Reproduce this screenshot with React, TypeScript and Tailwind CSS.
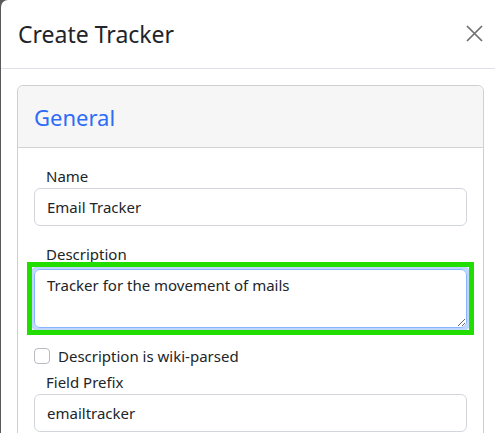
export default function App() {
  return (
    <div
      className="w-[495px] h-[433px] overflow-hidden bg-[#5a5a5a] flex"
      style={{ fontFamily: '"Noto Sans", "Open Sans", sans-serif' }}
    >
      <div className="ml-[1px] w-[510px] shrink-0 bg-white rounded-tl-[7px] text-[#212529]">
        <div className="h-[69px] flex items-center justify-between pl-[17px] pr-[28px] border-b border-[#dee2e6]">
          <h1 className="text-[23px] leading-none">Create Tracker</h1>
          <svg width="17" height="17" viewBox="0 0 17 17" className="text-[#6f6f6f] -mt-[1px]">
            <path d="M1 1L16 16M16 1L1 16" stroke="currentColor" strokeWidth="1.7" />
          </svg>
        </div>
        <div className="pt-[16px] pl-[16px] w-[483px]">
          <div className="border border-[#cfcfcf] rounded-[6px]">
            <div className="h-[62px] bg-[#f6f6f6] border-b border-[#d3d3d3] rounded-t-[6px] flex items-center px-[16px]">
              <h2 className="text-[22px] text-[#2d6cf6] leading-none">General</h2>
            </div>
            <div className="px-[16px] pt-[16px] flex flex-col">
              <label className="px-[12px] text-[15px] leading-[24px]">Name</label>
              <input
                className="h-[38px] border border-[#d2d6dc] rounded-[6px] px-[12px] text-[15px] outline-none"
                defaultValue="Email Tracker"
              />
              <label className="mt-[16px] px-[12px] text-[15px] leading-[24px]">Description</label>
              <div className="relative mt-[3px] flex">
                <textarea
                  className="w-full h-[59px] border border-[#86b7fe] rounded-[6px] px-[12px] pt-[3px] text-[15px] leading-[24px] resize-y shadow-[0_0_0_4px_#bfd7fd] outline-none"
                  defaultValue="Tracker for the movement of mails"
                />
                <span className="absolute -inset-[7px] border-[5px] border-[#22dd00] pointer-events-none" />
              </div>
              <label className="mt-[16px] flex items-center gap-[8px] text-[15px] leading-[24px]">
                <span className="w-[16px] h-[16px] border border-[#b8bcc1] rounded-[4px] bg-white" />
                Description is wiki-parsed
              </label>
              <label className="mt-[2px] px-[12px] text-[15px] leading-[24px]">Field Prefix</label>
              <input
                className="h-[38px] border border-[#d2d6dc] rounded-[6px] px-[12px] text-[15px] outline-none"
                defaultValue="emailtracker"
              />
              <div className="h-[20px]" />
            </div>
          </div>
        </div>
      </div>
    </div>
  );
}
